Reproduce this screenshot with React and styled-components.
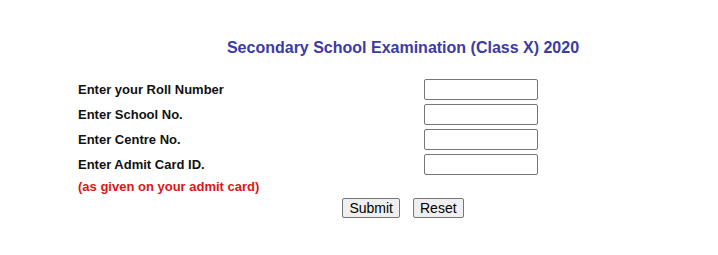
import React from 'react';
import styled, { createGlobalStyle } from 'styled-components';

const GlobalStyle = createGlobalStyle`
  body {
    margin: 0;
    background: #ffffff;
    font-family: "Liberation Sans", Arial, sans-serif;
    overflow: hidden;
  }
`;

const Page = styled.div`
  width: 650px;
  margin-left: 78px;
  padding-top: 38px;
`;

const Title = styled.h1`
  margin: 0 0 19px 0;
  height: 20px;
  line-height: 20px;
  font-size: 16px;
  font-weight: bold;
  color: #3b3ba3;
  text-align: center;
`;

const Form = styled.form`
  display: grid;
  grid-template-columns: 346px 1fr;
  grid-auto-rows: 25px;
  align-items: center;
`;

const Label = styled.label`
  font-size: 13px;
  font-weight: bold;
  color: #111111;
`;

const Field = styled.input`
  box-sizing: border-box;
  width: 114px;
  height: 21px;
  margin: 0;
  border: 1px solid #767676;
  border-radius: 2px;
  background: #ffffff;
  outline: none;
`;

const Note = styled.div`
  height: 20px;
  font-size: 13px;
  font-weight: bold;
  color: #dd1515;
  line-height: 20px;
`;

const Actions = styled.div`
  display: flex;
  justify-content: center;
  gap: 13px;
  margin-top: 1px;
`;

const Button = styled.button`
  box-sizing: border-box;
  height: 20px;
  padding: 0 6px;
  border: 1px solid #767676;
  border-radius: 2px;
  background: #efefef;
  font-family: "Liberation Sans", Arial, sans-serif;
  font-size: 14px;
  color: #000000;
  line-height: 18px;
`;

const fields = [
  'Enter your Roll Number',
  'Enter School No.',
  'Enter Centre No.',
  'Enter Admit Card ID.',
];

export default function App() {
  return (
    <>
      <GlobalStyle />
      <Page>
        <Title>Secondary School Examination (Class X) 2020</Title>
        <Form onSubmit={(e) => e.preventDefault()}>
          {fields.map((label) => (
            <React.Fragment key={label}>
              <Label>{label}</Label>
              <Field type="text" />
            </React.Fragment>
          ))}
        </Form>
        <Note>(as given on your admit card)</Note>
        <Actions>
          <Button type="button">Submit</Button>
          <Button type="reset">Reset</Button>
        </Actions>
      </Page>
    </>
  );
}
